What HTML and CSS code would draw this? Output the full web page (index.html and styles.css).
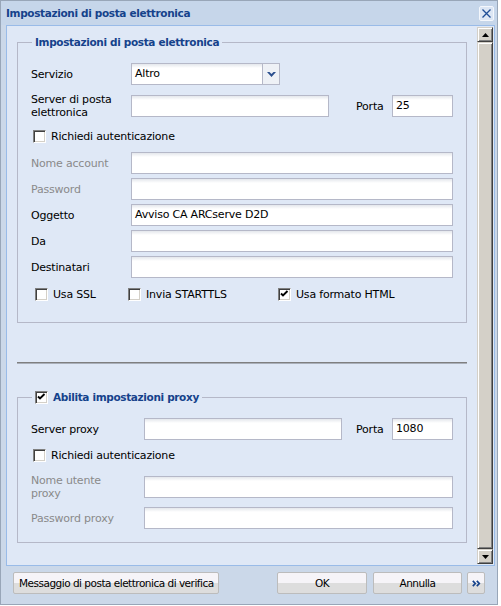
FILE: index.html
```html
<!DOCTYPE html>
<html>
<head>
<meta charset="utf-8">
<title>Impostazioni di posta elettronica</title>
<link rel="stylesheet" href="styles.css">
</head>
<body>
<div class="window">
  <div class="titlebar">
    <span class="title">Impostazioni di posta elettronica</span>
    <span class="close"><svg width="11" height="11" viewBox="0 0 11 11"><path d="M1.5 1.5 L9.5 9.5 M9.5 1.5 L1.5 9.5" stroke="#1d4d96" stroke-width="1.3" fill="none"/></svg></span>
  </div>
  <div class="frame">
    <div class="panel">
      <div class="content">
        <fieldset class="group g1">
          <legend>Impostazioni di posta elettronica</legend>
          <div class="inner">
            <div class="row r1">
              <span class="lbl">Servizio</span>
              <div class="select">
                <span class="sel-text">Altro</span>
                <span class="trigger"><svg width="9" height="5" viewBox="0 0 9 5"><polygon points="0,0 2.5,0 4.5,2 6.5,0 9,0 4.5,5" fill="#2b4f8e"/></svg></span>
              </div>
            </div>
            <div class="row tall r2">
              <span class="lbl">Server di posta elettronica</span>
              <span class="field w198"></span>
              <span class="porta">Porta</span>
              <span class="field port">25</span>
            </div>
            <div class="row r3">
              <label class="ck auth"><span class="cb"></span><span>Richiedi autenticazione</span></label>
            </div>
            <div class="row r4">
              <span class="lbl dis">Nome account</span>
              <span class="field"></span>
            </div>
            <div class="row rn">
              <span class="lbl dis">Password</span>
              <span class="field"></span>
            </div>
            <div class="row rn">
              <span class="lbl">Oggetto</span>
              <span class="field">Avviso CA ARCserve D2D</span>
            </div>
            <div class="row rn">
              <span class="lbl">Da</span>
              <span class="field"></span>
            </div>
            <div class="row rn">
              <span class="lbl">Destinatari</span>
              <span class="field"></span>
            </div>
            <div class="row checks">
              <label class="ck c1"><span class="cb"></span><span>Usa SSL</span></label>
              <label class="ck c2"><span class="cb"></span><span>Invia STARTTLS</span></label>
              <label class="ck"><span class="cb"><svg width="11" height="11" viewBox="0 0 11 11"><polyline points="2,4.5 4,6.5 8.5,2" fill="none" stroke="#000" stroke-width="1.9"/></svg></span><span>Usa formato HTML</span></label>
            </div>
          </div>
        </fieldset>

        <div class="sep"></div>

        <fieldset class="group g2">
          <legend><span class="legend-in"><span class="cb"><svg width="11" height="11" viewBox="0 0 11 11"><polyline points="2,4.5 4,6.5 8.5,2" fill="none" stroke="#000" stroke-width="1.9"/></svg></span><span>Abilita impostazioni proxy</span></span></legend>
          <div class="inner inner2">
            <div class="row">
              <span class="lbl">Server proxy</span>
              <span class="field w198"></span>
              <span class="porta">Porta</span>
              <span class="field port">1080</span>
            </div>
            <div class="row p2">
              <label class="ck auth"><span class="cb"></span><span>Richiedi autenticazione</span></label>
            </div>
            <div class="row tall p3">
              <span class="lbl dis narrow">Nome utente proxy</span>
              <span class="field"></span>
            </div>
            <div class="row p4">
              <span class="lbl dis">Password proxy</span>
              <span class="field"></span>
            </div>
          </div>
        </fieldset>
      </div>
      <div class="scrollbar">
        <span class="sb-btn"><svg width="7" height="4" viewBox="0 0 7 4"><polygon points="0,4 3.5,0 7,4" fill="#000"/></svg></span>
        <span class="sb-thumb"></span>
        <span class="sb-btn"><svg width="7" height="4" viewBox="0 0 7 4"><polygon points="0,0 7,0 3.5,4" fill="#000"/></svg></span>
      </div>
    </div>
  </div>
  <div class="footer">
    <span class="btn btn-test">Messaggio di posta elettronica di verifica</span>
    <span class="spacer"></span>
    <span class="btn btn-ok">OK</span>
    <span class="btn btn-cancel">Annulla</span>
    <span class="btn btn-more"><svg width="9" height="7" viewBox="0 0 9 7"><path d="M0.8 0.8 L3.3 3.5 L0.8 6.2 M4.8 0.8 L7.3 3.5 L4.8 6.2" fill="none" stroke="#15428b" stroke-width="1.7"/></svg></span>
  </div>
</div>
</body>
</html>
```

FILE: styles.css
```css
* { box-sizing: border-box; }

body {
  margin: 0;
  background: #ffffff;
  font-family: "DejaVu Sans", Verdana, sans-serif;
  font-size: 11px;
  letter-spacing: -0.2px;
  color: #000;
}

.window {
  width: 498px;
  height: 605px;
  border: 1px solid #98a6b8;
  background: #cbd8e9;
  display: flex;
  flex-direction: column;
}

.titlebar {
  height: 24px;
  flex: none;
  background: #c6d6ea;
  display: flex;
  align-items: center;
  justify-content: space-between;
  padding: 0 3px 0 5px;
}

.title {
  font-weight: bold;
  font-size: 10.5px;
  letter-spacing: -0.35px;
  color: #15428b;
}

.close {
  width: 15px;
  height: 15px;
  border: 1px solid #f4f7fc;
  border-radius: 2px;
  background: #dce6f4;
  display: flex;
  align-items: center;
  justify-content: center;
}

.frame {
  flex: none;
  padding: 0 2px 0 5px;
}

.panel {
  height: 541px;
  border: 1px solid #99bbe8;
  background: #dfe8f6;
  display: flex;
}

.content {
  width: 470px;
  flex: none;
  padding: 0 10px;
  overflow: hidden;
}

/* fieldsets */
.group {
  margin: 9px 0 0;
  padding: 0;
  border: 1px solid #b5b8c8;
  min-width: 0;
}

.group legend {
  margin-left: 14px;
  padding: 0 3px;
  height: 15px;
  line-height: 15px;
  font-weight: bold;
  font-size: 10.5px;
  letter-spacing: -0.35px;
  color: #15428b;
}

.legend-in {
  display: flex;
  align-items: center;
  gap: 5px;
  height: 15px;
}

.inner {
  padding: 13px 13px 17px 13px;
}

.inner2 {
  padding-bottom: 13px;
}

.row {
  display: flex;
  align-items: center;
  height: 22px;
}

.row.tall { height: 26px; }

.r2 { margin-top: 8px; }
.r3 { margin-top: 6px; }
.r4 { margin-top: 5px; }
.rn { margin-top: 4px; }
.checks { margin-top: 5px; padding-left: 4px; }

.p2 { margin-top: 4px; }
.p3 { margin-top: 8px; }
.p4 { margin-top: 7px; }

.lbl {
  width: 100px;
  flex: none;
  line-height: 13px;
  padding-right: 6px;
}

.g2 .lbl { width: 113px; }
.g2 .lbl.narrow { padding-right: 30px; }

.lbl.dis { color: #8a8a8a; }

.field {
  flex: 1;
  height: 22px;
  border: 1px solid #b5b8c8;
  background: linear-gradient(#e4e7ec, #ffffff 4px);
  padding: 0 3px;
  line-height: 20px;
  white-space: nowrap;
}

.field.w198 { flex: none; width: 198px; }
.field.port { flex: none; width: 61px; }

.porta {
  margin-left: 27px;
  width: 36px;
  flex: none;
}

.g2 .porta { margin-left: 14px; }

/* select */
.select {
  display: flex;
  width: 149px;
  height: 22px;
}

.sel-text {
  width: 132px;
  border: 1px solid #b5b8c8;
  background: linear-gradient(#e4e7ec, #ffffff 4px);
  padding: 0 3px;
  line-height: 20px;
}

.trigger {
  width: 17px;
  border: 1px solid #b5b8c8;
  border-left: none;
  background: #eef1f6;
  display: flex;
  align-items: center;
  justify-content: center;
}

/* checkboxes */
.ck {
  display: flex;
  align-items: center;
  gap: 5px;
  white-space: nowrap;
}

.auth { margin-left: 2px; }
.c1 { width: 93px; flex: none; }
.c2 { width: 150px; flex: none; }

.cb {
  width: 13px;
  height: 13px;
  flex: none;
  background: #fff;
  border: 1px solid;
  border-color: #808080 #ffffff #ffffff #808080;
  box-shadow: inset 1px 1px #404040, inset -1px -1px #d4d0c8;
  display: flex;
  align-items: center;
  justify-content: center;
}

.sep {
  margin-top: 39px;
  height: 2px;
  border-top: 1px solid #7f7f7f;
  border-bottom: 1px solid #a9afb9;
}

.g2 { margin-top: 26px; }

/* scrollbar */
.scrollbar {
  width: 16px;
  flex: none;
  display: flex;
  flex-direction: column;
  padding: 1px 0;
}

.sb-btn,
.sb-thumb {
  background: #d4d0c8;
  border: 1px solid;
  border-color: #d4d0c8 #404040 #404040 #d4d0c8;
  box-shadow: inset 1px 1px #ffffff, inset -1px -1px #808080;
}

.sb-btn {
  height: 15px;
  flex: none;
  display: flex;
  align-items: center;
  justify-content: center;
}

.sb-thumb { flex: 1; }

/* footer */
.footer {
  flex: 1;
  display: flex;
  align-items: flex-start;
  padding: 6px 12px 0 12px;
}

.spacer { flex: 1; }

.btn {
  height: 22px;
  border: 1px solid #bcbcbc;
  border-radius: 2px;
  background: linear-gradient(#f6f4f8 50%, #dddddd 50%);
  display: flex;
  align-items: center;
  justify-content: center;
  font-size: 10.5px;
  letter-spacing: -0.5px;
  white-space: nowrap;
}

.btn-test {
  width: 206px;
  justify-content: flex-start;
  padding-left: 5px;
}

.btn-ok { width: 90px; }
.btn-cancel { width: 89px; margin-left: 6px; }
.btn-more { width: 18px; margin-left: 5px; }
```
